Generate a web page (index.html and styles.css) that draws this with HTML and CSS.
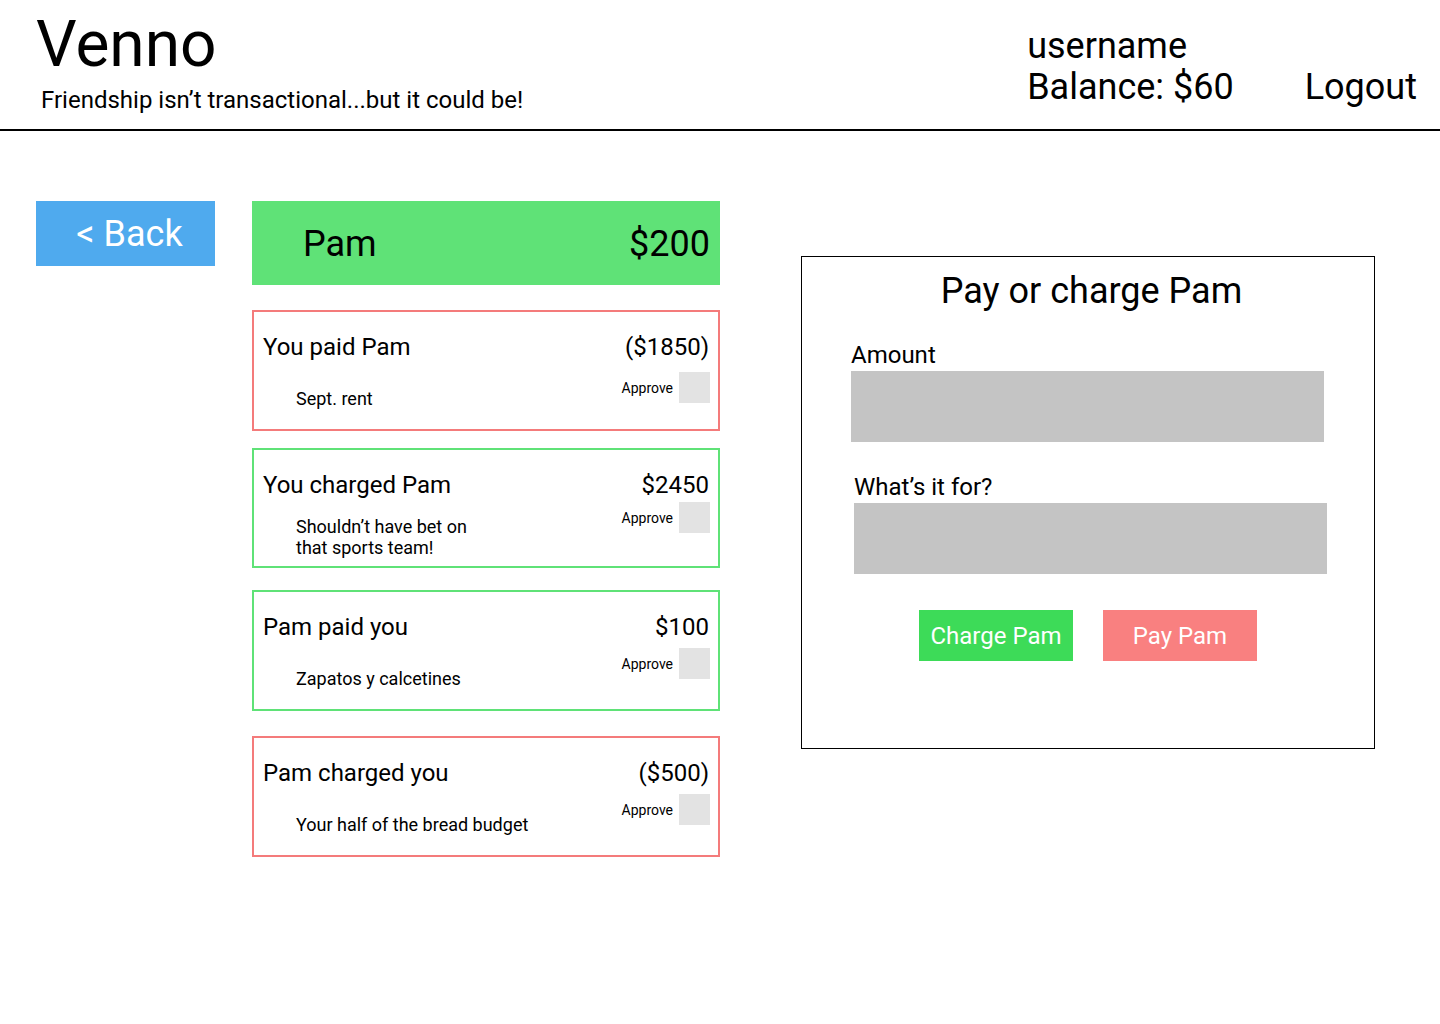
FILE: index.html
```html
<!DOCTYPE html>
<html lang="en">
<head>
<meta charset="utf-8">
<title>Venno</title>
<link rel="stylesheet" href="styles.css">
</head>
<body>
<header class="topbar">
  <div class="brand">
    <div class="brand__name">Venno</div>
    <div class="brand__tagline">Friendship isn’t transactional...but it could be!</div>
  </div>
  <div class="account">
    <div class="account__info">
      <div class="account__line">username</div>
      <div class="account__line">Balance: $60</div>
    </div>
    <div class="account__logout">Logout</div>
  </div>
</header>

<main class="page">
  <div class="back-btn">&lt; Back</div>

  <section class="ledger">
    <div class="ledger__head">
      <span>Pam</span>
      <span>$200</span>
    </div>

    <div class="tx tx--debit tx--low">
      <div class="tx__top">
        <span>You paid Pam</span>
        <span>($1850)</span>
      </div>
      <div class="tx__body">
        <div class="tx__desc">Sept. rent</div>
        <div class="tx__approve"><span>Approve</span><span class="tx__check"></span></div>
      </div>
    </div>

    <div class="tx tx--credit tx--tight tx--high">
      <div class="tx__top">
        <span>You charged Pam</span>
        <span>$2450</span>
      </div>
      <div class="tx__body">
        <div class="tx__desc tx__desc--multi">Shouldn’t have bet on<br>that sports team!</div>
        <div class="tx__approve"><span>Approve</span><span class="tx__check"></span></div>
      </div>
    </div>

    <div class="tx tx--credit tx--mid">
      <div class="tx__top">
        <span>Pam paid you</span>
        <span>$100</span>
      </div>
      <div class="tx__body">
        <div class="tx__desc">Zapatos y calcetines</div>
        <div class="tx__approve"><span>Approve</span><span class="tx__check"></span></div>
      </div>
    </div>

    <div class="tx tx--debit">
      <div class="tx__top">
        <span>Pam charged you</span>
        <span>($500)</span>
      </div>
      <div class="tx__body">
        <div class="tx__desc">Your half of the bread budget</div>
        <div class="tx__approve"><span>Approve</span><span class="tx__check"></span></div>
      </div>
    </div>
  </section>

  <section class="panel">
    <h2 class="panel__title">Pay or charge Pam</h2>
    <div class="field">
      <div class="field__label">Amount</div>
      <div class="field__input"></div>
    </div>
    <div class="field field--shift">
      <div class="field__label">What’s it for?</div>
      <div class="field__input"></div>
    </div>
    <div class="actions">
      <div class="btn btn--charge">Charge Pam</div>
      <div class="btn btn--pay">Pay Pam</div>
    </div>
  </section>
</main>
</body>
</html>
```

FILE: styles.css
```css
* { box-sizing: border-box; }

html, body {
  margin: 0;
  padding: 0;
  background: #ffffff;
}

body {
  font-family: Roboto, "Liberation Sans", Arial, sans-serif;
  color: #000;
  width: 1440px;
}

/* ---------- header ---------- */
.topbar {
  height: 131px;
  border-bottom: 2px solid #000;
  display: flex;
  justify-content: space-between;
  align-items: flex-start;
}

.brand {
  padding: 13px 0 0 36px;
}

.brand__name {
  font-size: 64px;
  line-height: 64px;
}

.brand__tagline {
  margin-top: 11px;
  padding-left: 5px;
  font-size: 24px;
  line-height: 24px;
}

.account {
  display: flex;
  align-items: flex-end;
  gap: 71px;
  padding: 26px 23px 0 0;
  font-size: 36px;
  line-height: 41px;
}

/* ---------- main ---------- */
.page {
  display: flex;
  align-items: flex-start;
  padding: 70px 0 0 36px;
}

.back-btn {
  width: 179px;
  height: 65px;
  padding-left: 8px;
  background: #4faaee;
  color: #fff;
  font-size: 36px;
  line-height: 36px;
  display: flex;
  align-items: center;
  justify-content: center;
}

.ledger {
  width: 468px;
  margin-left: 37px;
  display: flex;
  flex-direction: column;
}

.ledger__head {
  height: 84px;
  background: #5fe277;
  display: flex;
  justify-content: space-between;
  align-items: center;
  padding: 2px 10px 0 51px;
  font-size: 36px;
  line-height: 36px;
}

.tx {
  height: 121px;
  margin-top: 25px;
  border: 2px solid;
  padding: 21px 9px 0 9px;
}

.tx--tight { margin-top: 17px; height: 120px; }
.tx--mid { margin-top: 22px; }

.tx--debit { border-color: #f47b7b; }
.tx--credit { border-color: #5fe277; }

.tx__top {
  display: flex;
  justify-content: space-between;
  font-size: 24px;
  line-height: 28px;
}

.tx__body {
  display: flex;
  justify-content: space-between;
  align-items: flex-start;
  margin-top: 7px;
}

.tx--low .tx__body { margin-top: 11px; }
.tx--low .tx__desc { margin-top: 16px; }
.tx--high .tx__body { margin-top: 3px; }

.tx__desc {
  margin: 20px 0 0 33px;
  font-size: 18px;
  line-height: 21px;
}

.tx__desc--multi { margin-top: 14px; }

.tx__approve {
  display: flex;
  align-items: center;
  gap: 6px;
  font-size: 14px;
  line-height: 16px;
  margin-right: -1px;
}

.tx__check {
  width: 31px;
  height: 31px;
  background: #e3e3e3;
}

/* ---------- form panel ---------- */
.panel {
  width: 574px;
  height: 493px;
  margin: 55px 0 0 81px;
  border: 1px solid #000;
  padding: 13px 0 0 49px;
}

.panel__title {
  margin: 0 0 0 -42px;
  font-size: 36px;
  line-height: 42px;
  font-weight: 400;
  text-align: center;
}

.field {
  margin-top: 29px;
}

.field--shift {
  margin-top: 31px;
  margin-left: 3px;
}

.field__label {
  font-size: 24px;
  line-height: 28px;
}

.field__input {
  width: 473px;
  height: 71px;
  margin-top: 2px;
  background: #c4c4c4;
}

.actions {
  display: flex;
  justify-content: center;
  gap: 30px;
  margin: 36px 0 0 -49px;
}

.btn {
  width: 154px;
  height: 51px;
  display: flex;
  align-items: center;
  justify-content: center;
  color: #fff;
  font-size: 24px;
  line-height: 24px;
}

.btn--charge { background: #3ddb58; }
.btn--pay { background: #f98080; }
```
